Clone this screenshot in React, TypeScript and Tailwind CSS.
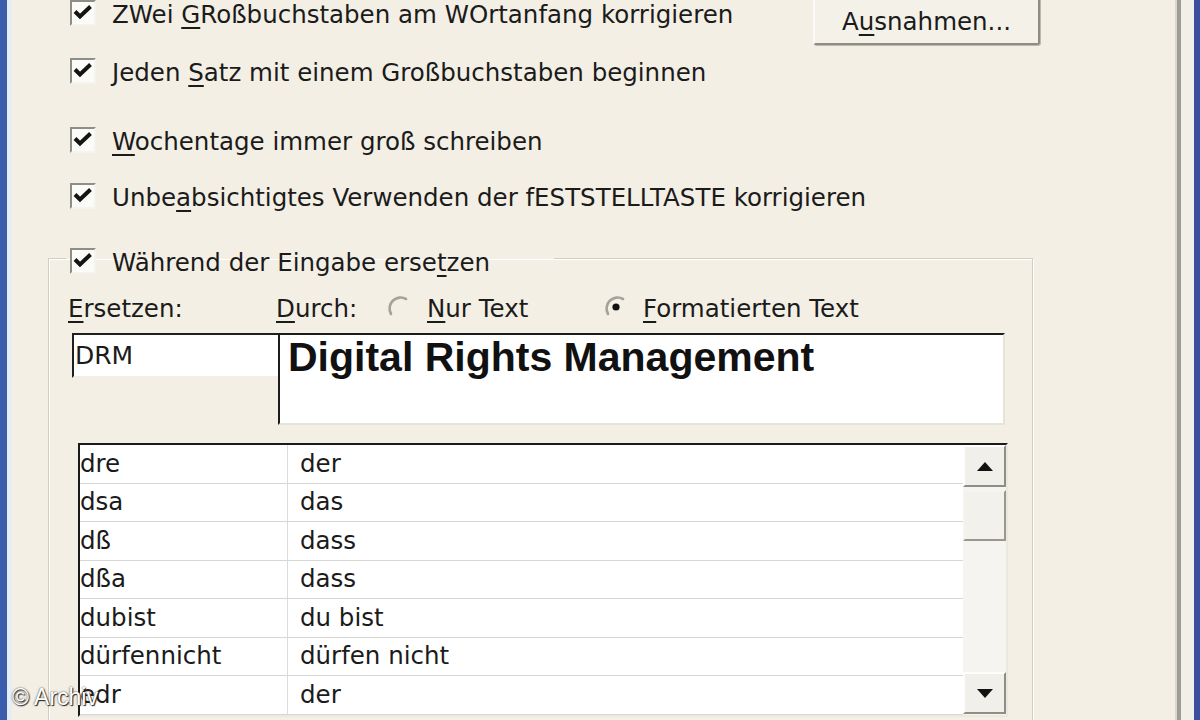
import type { ReactNode } from 'react'

const ROWS: [string, string][] = [
  ['dre', 'der'],
  ['dsa', 'das'],
  ['dß', 'dass'],
  ['dßa', 'dass'],
  ['dubist', 'du bist'],
  ['dürfennicht', 'dürfen nicht'],
  ['edr', 'der'],
]

// accelerator letter
function U({ children }: { children: ReactNode }) {
  return <span className="underline decoration-[2px] underline-offset-[4px]">{children}</span>
}

function Checkbox() {
  return (
    <span className="mb-[5px] flex h-[26px] w-[26px] shrink-0 items-center justify-center border-2 border-[#f4f3ee] border-t-[#8e8d87] border-l-[#8e8d87] bg-[#fbfbf8]">
      <svg viewBox="0 0 22 22" className="h-[22px] w-[22px]">
        <path d="M3 9.5 L8 14.5 L18.5 4.5" fill="none" stroke="#141414" strokeWidth="4" />
      </svg>
    </span>
  )
}

function Radio({ on }: { on?: boolean }) {
  return (
    <svg viewBox="0 0 26 26" className="mb-[4px] h-[26px] w-[26px] shrink-0">
      <path d="M5 20 A11 11 0 0 1 20 5" fill="none" stroke="#a4a29b" strokeWidth="2.6" strokeLinecap="round" />
      {on && <circle cx="13" cy="13" r="3.6" fill="#111" />}
    </svg>
  )
}

function CheckRow({ children, className = '' }: { children: ReactNode; className?: string }) {
  return (
    <div className={`flex h-[30px] items-center gap-[16px] pl-[22px] ${className}`}>
      <Checkbox />
      <span className="whitespace-nowrap">{children}</span>
    </div>
  )
}

function ScrollButton({ up }: { up?: boolean }) {
  return (
    <div className="flex h-[42px] items-center justify-center border-2 border-[#fdfdfb] border-r-[#8f8d86] border-b-[#8f8d86] bg-[#f1efe9]">
      <svg viewBox="0 0 16 9" className="h-[9px] w-[16px]">
        <path d={up ? 'M0 9 L8 0 L16 9 Z' : 'M0 0 L16 0 L8 9 Z'} fill="#111" />
      </svg>
    </div>
  )
}

export default function App() {
  return (
    <div className="relative flex h-[720px] w-[1200px] overflow-hidden bg-[#f3efe5] font-['DejaVu_Sans','Noto_Sans',sans-serif] text-[24.5px] leading-[30px] text-[#1b1b1b]">
      <div className="w-[7px] shrink-0 bg-[#3b5cad]" />
      <div className="w-[5px] shrink-0 bg-[#e4eef4]" />

      <main className="flex-1 pl-[36px]">
        <div className="-mt-[17px] flex w-[992px] items-start justify-between">
          <CheckRow className="mt-[17px]">
            ZWei <U>G</U>Roßbuchstaben am WOrtanfang korrigieren
          </CheckRow>
          <button className="flex h-[62px] w-[227px] items-center justify-center rounded-[3px] border-2 border-[#fbfaf6] border-r-[#8f8c84] border-b-[#8f8c84] bg-[#f4f1e9] pt-[16px] shadow-[1px_1px_0_#bdb9af]">
            A<U>u</U>snahmen...
          </button>
        </div>
        <CheckRow className="mt-[13px]">
          Jeden <U>S</U>atz mit einem Großbuchstaben beginnen
        </CheckRow>
        <CheckRow className="mt-[39px]">
          <U>W</U>ochentage immer groß schreiben
        </CheckRow>
        <CheckRow className="mt-[26px]">
          Unbe<U>a</U>bsichtigtes Verwenden der fESTSTELLTASTE korrigieren
        </CheckRow>

        <fieldset className="mt-[25px] w-[985px] border border-[#d2cec1] pb-[40px] shadow-[inset_1px_1px_0_#fff,1px_1px_0_#fff]">
          <legend className="ml-[17px] pl-[4px] pr-[64px] pt-[10px]">
            <div className="flex h-[30px] items-center gap-[16px]">
              <Checkbox />
              <span className="whitespace-nowrap">
                Während der Eingabe erse<U>t</U>zen
              </span>
            </div>
          </legend>

          <div className="mt-[16px] flex h-[30px] items-center whitespace-nowrap">
            <span className="w-[227px] pl-[19px]">
              <U>E</U>rsetzen:
            </span>
            <span className="w-[110px]">
              <U>D</U>urch:
            </span>
            <span className="flex w-[217px] items-center gap-[15px]">
              <Radio />
              <span>
                <U>N</U>ur Text
              </span>
            </span>
            <span className="flex items-center gap-[14px]">
              <Radio on />
              <span>
                <U>F</U>ormatierten Text
              </span>
            </span>
          </div>

          <div className="mt-[9px] flex items-start pl-[23px]">
            <div className="h-[45px] w-[206px] border-2 border-r-0 border-[#f1efe8] border-t-[#202020] border-l-[#202020] bg-white pl-[1px] pt-[6px] text-[25px]">
              DRM
            </div>
            <div className="h-[92px] w-[727px] border-2 border-[#e6e3d9] border-t-[#1c1c1c] border-l-[#1c1c1c] bg-white pl-[8px] pt-[2px] font-['Liberation_Sans',Arial,sans-serif] text-[41px] font-bold leading-none text-[#111]">
              Digital Rights Management
            </div>
          </div>

          <div className="mt-[18px] ml-[29px] flex w-[930px] border-2 border-[#ebe8df] border-t-[#1a1a1a] border-l-[#1a1a1a] bg-white">
            <div className="flex-1">
              {ROWS.map(([from, to]) => (
                <div key={from} className="flex h-[38.5px] items-center border-b border-[#d6d6d3]">
                  <span className="flex h-full w-[208px] items-center border-r border-[#dcdcda]">{from}</span>
                  <span className="pl-[12px]">{to}</span>
                </div>
              ))}
            </div>
            <div className="flex w-[43px] flex-col bg-[#f5f4f0]">
              <ScrollButton up />
              <div className="h-[185px] pt-[3px]">
                <div className="h-[51px] border-2 border-[#f5f4f0] border-r-[#9a978f] border-b-[#9a978f] bg-[#f3f1eb]" />
              </div>
              <ScrollButton />
            </div>
          </div>
        </fieldset>
      </main>

      <div className="w-[2px] shrink-0 bg-[#dcd7cb]" />
      <div className="w-[4px] shrink-0 bg-[#9f9c95]" />
      <div className="w-[13px] shrink-0 bg-[#f1efe8]" />
      <div className="w-[6px] shrink-0 bg-[#3a4f9d]" />

      <span className="absolute bottom-[11px] left-[12px] font-['Liberation_Sans',Arial,sans-serif] text-[23px] leading-none text-white [text-shadow:0_0_2px_#333,1px_1px_1px_#222]">
        © Archiv
      </span>
    </div>
  )
}
